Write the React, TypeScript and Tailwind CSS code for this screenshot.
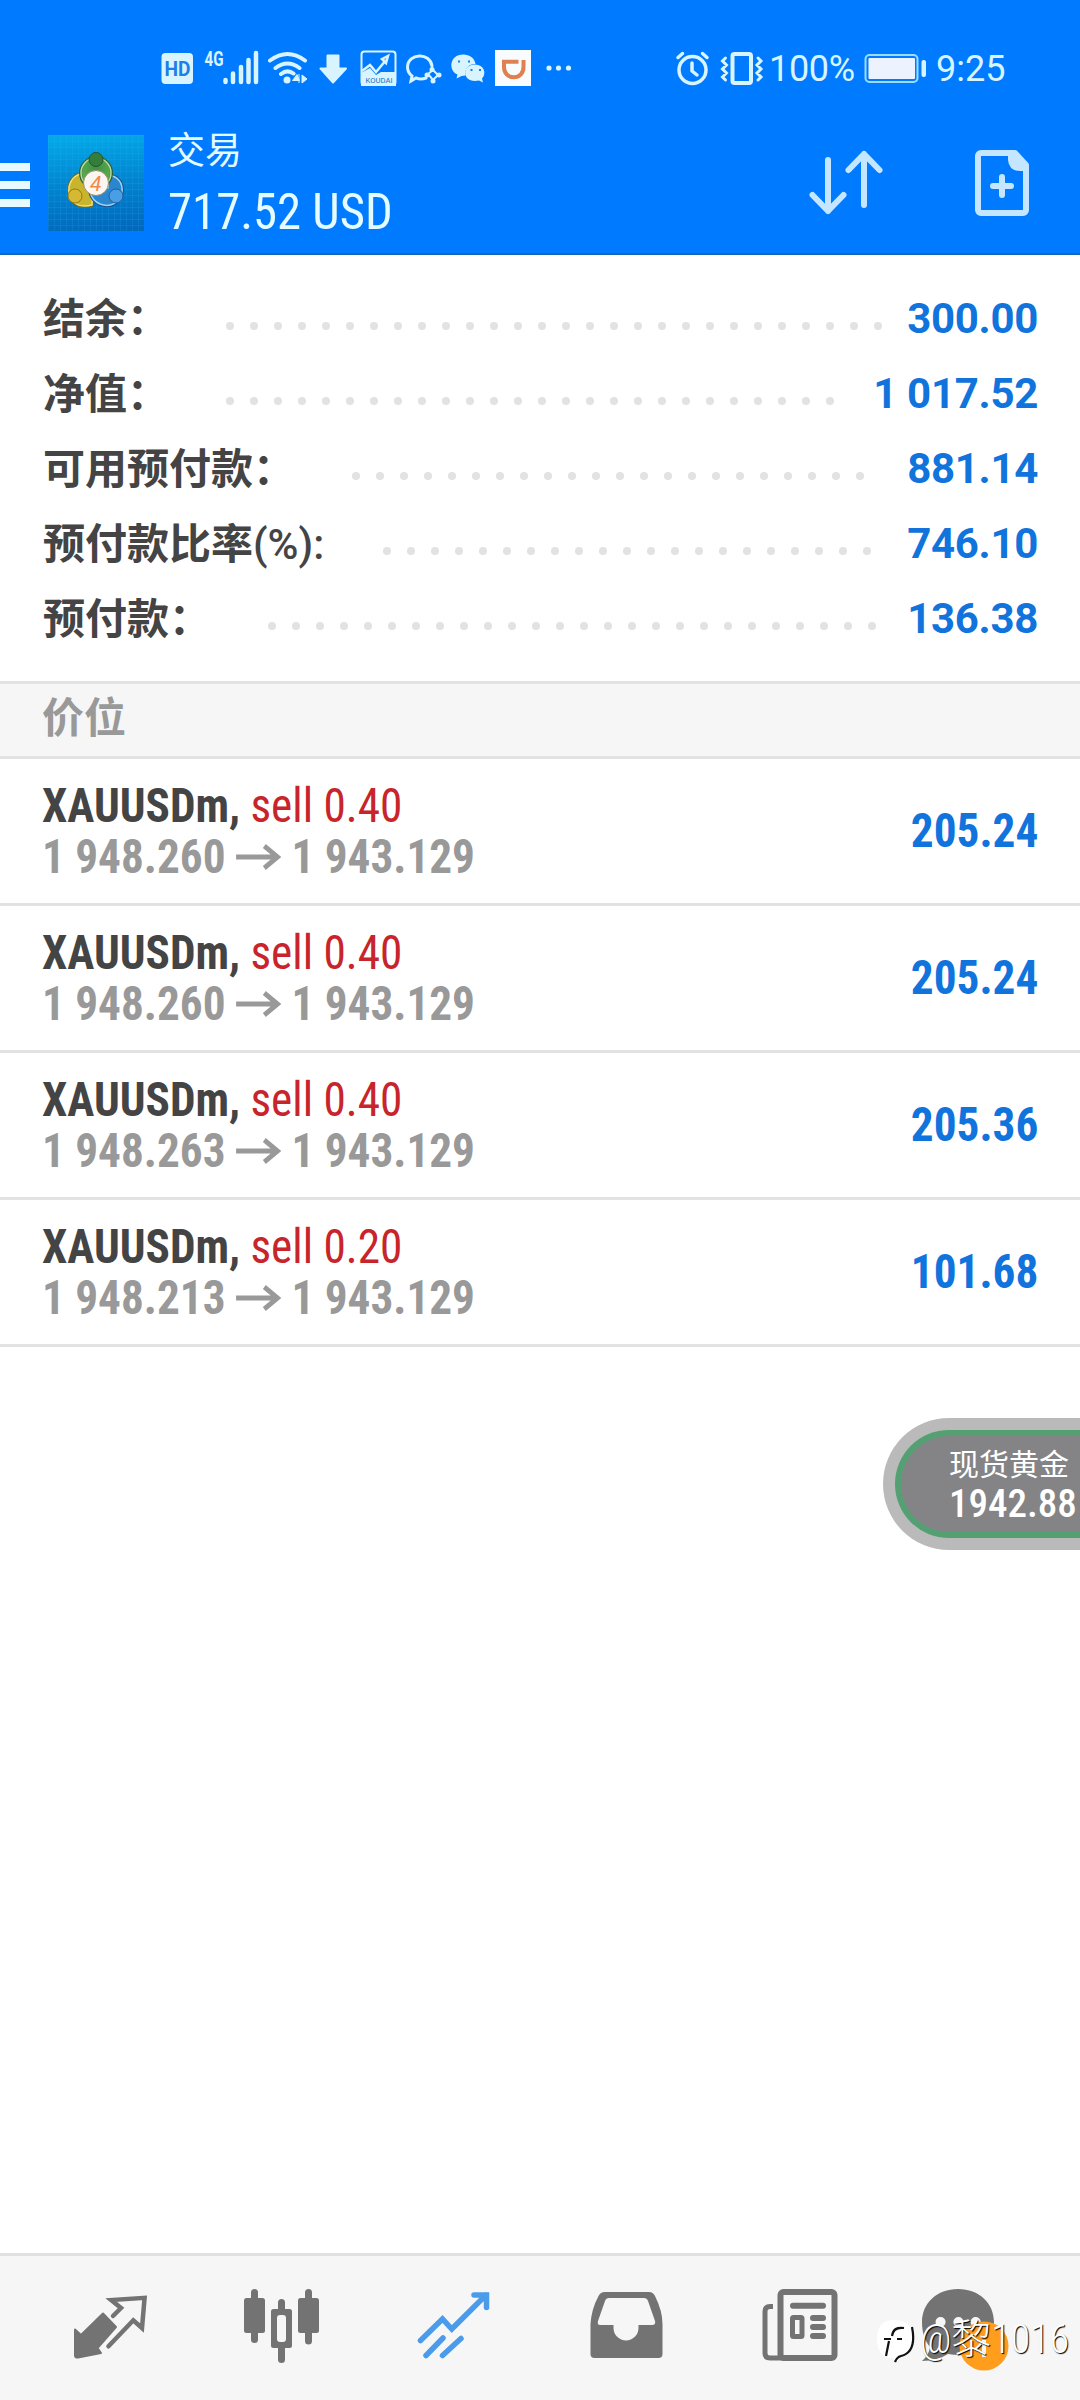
import React from 'react';

interface SummaryRow {
  label: string;
  value: string;
  dots: number;
  labelWidth: string;
}

interface Position {
  volume: string;
  open: string;
  current: string;
  profit: string;
}

const summary: SummaryRow[] = [
  { label: '结余：', value: '300.00', dots: 28, labelWidth: 'w-[183px]' },
  { label: '净值：', value: '1 017.52', dots: 26, labelWidth: 'w-[183px]' },
  { label: '可用预付款：', value: '881.14', dots: 22, labelWidth: 'w-[309px]' },
  { label: '预付款比率(%):', value: '746.10', dots: 21, labelWidth: 'w-[340px]' },
  { label: '预付款：', value: '136.38', dots: 26, labelWidth: 'w-[225px]' },
];

const positions: Position[] = [
  { volume: '0.40', open: '1 948.260', current: '1 943.129', profit: '205.24' },
  { volume: '0.40', open: '1 948.260', current: '1 943.129', profit: '205.24' },
  { volume: '0.40', open: '1 948.263', current: '1 943.129', profit: '205.36' },
  { volume: '0.20', open: '1 948.213', current: '1 943.129', profit: '101.68' },
];

const StatusBar: React.FC = () => (
  <div className="flex h-[122px] items-start pt-[46px] text-[#d8f4ff]">
    {/* Notification icons */}
    <svg className="ml-[156px] h-[44px] w-[424px]" viewBox="156 46 424 44" fill="none" stroke="currentColor">
      <rect x="161.500" y="53" width="31.500" height="31" rx="4" fill="currentColor" stroke="none" />
      <text x="164.500" y="75.500" fill="#1f7fe8" stroke="none" fontSize="20" fontWeight="700" textLength="26" lengthAdjust="spacingAndGlyphs" fontFamily="Roboto, sans-serif">HD</text>
      <text x="204.500" y="66" fill="currentColor" stroke="none" fontSize="20" fontWeight="700" textLength="19" lengthAdjust="spacingAndGlyphs" fontFamily="Roboto, sans-serif">4G</text>
      <path d="M225.500 80v2M233 73.500v8.500M241 67v15M248.500 60v22M256 53v29" strokeWidth="4.500" strokeLinecap="round" />
      <path d="M270 60.500q17.500-13 35 0M275.500 68q12-9 24 0M281 74q6.500-5 12.500-.5" strokeWidth="4" strokeLinecap="round" />
      <circle cx="287" cy="80" r="3.500" fill="currentColor" stroke="none" />
      <path d="M299 74v9M292.500 80.500h7l-2.500-6zM302 75l5 4-5 4z" fill="currentColor" strokeWidth="1" />
      <path d="M327.500 55.500h11v13h7.500L333 82.500l-12.500-14h7z" fill="currentColor" strokeWidth="2" strokeLinejoin="round" />
      <rect x="361.500" y="51.500" width="34" height="33.500" rx="3" strokeWidth="2" />
      <path d="M361 73l9-5 6 7 5-3h15v14h-35z" fill="currentColor" stroke="none" />
      <path d="M362 71l8-6 6 7 10-12M382 59l6-3-2 7z" strokeWidth="2.500" />
      <text x="365.500" y="83" fill="#1f6fc0" stroke="none" fontSize="8" textLength="27" lengthAdjust="spacingAndGlyphs" fontFamily="Roboto, sans-serif">KOUDAI</text>
      <path d="M432 66c-2-14-24-13-24.500 1 0 5 2 7 4.500 9l-1 5 5-3q5 2 10 0" strokeWidth="3" strokeLinecap="round" />
      <path d="M428 74l5-4 5 5-5 5z" strokeWidth="2" />
      <circle cx="432" cy="69.500" r="2.500" fill="currentColor" stroke="none" />
      <circle cx="439" cy="75" r="2.500" fill="currentColor" stroke="none" />
      <circle cx="433" cy="81" r="2.500" fill="currentColor" stroke="none" />
      <circle cx="427" cy="75" r="2.500" fill="currentColor" stroke="none" />
      <path d="M463.500 54.500c-15 0-15 17-6 20l-1 4 5-2.500 4-.5c-1-7 3-11.500 10-11.500-1-6-6-9.500-12-9.500z" fill="currentColor" stroke="none" />
      <path d="M475 64.500c-13 0-13 16.500 0 16.500l4-.5 4 2-1-4c5-5 2-14-7-14z" fill="currentColor" stroke="none" />
      <path d="M458 61.500h2M468 61.500h2M470.500 70h2M479 70h2" stroke="#1f7fe8" strokeWidth="2" />
      <rect x="495" y="50" width="36" height="36" fill="#f8fcff" stroke="none" />
      <path d="M518.500 61.800H504V67c0 6 4 10.300 9.800 10.300S523.500 73 523.500 67v-7" stroke="#e07f51" strokeWidth="4" />
      <circle cx="549" cy="68" r="2.600" fill="currentColor" stroke="none" />
      <circle cx="558.500" cy="68" r="2.600" fill="currentColor" stroke="none" />
      <circle cx="568.500" cy="68" r="2.600" fill="currentColor" stroke="none" />
    </svg>
    <svg className="ml-[94px] h-[44px] w-[92px]" viewBox="674 46 92 44" fill="none" stroke="currentColor" strokeLinecap="round">
      <circle cx="692.500" cy="70" r="13.500" strokeWidth="3.500" />
      <path d="M678 57.500l4.500-4M707 57.500l-4.500-4" strokeWidth="3.500" />
      <path d="M692 63v8l5 4" strokeWidth="3.500" />
      <rect x="732.500" y="54" width="18.500" height="29" rx="2" strokeWidth="4" />
      <path d="M725.500 58l-3 3 4 4-4 4 4 4-4 4 3 3M758 58l3 3-4 4 4 4-4 4 4 4-3 3" strokeWidth="3" />
    </svg>
    <span className="ml-[3px] w-[90px] text-[36px] leading-[47px] tracking-[-0.3px] whitespace-nowrap">100%</span>
    <svg className="ml-[5px] h-[44px] w-[66px]" viewBox="864 46 66 44" fill="none">
      <rect x="865.500" y="55" width="52" height="27" rx="4" stroke="#9cdcff" strokeWidth="2" />
      <rect x="868.500" y="58" width="46.500" height="21" rx="1" fill="#ecf3ff" />
      <rect x="921.500" y="60" width="4.500" height="17" rx="2" fill="#d8f4ff" />
    </svg>
    <span className="ml-[6px] text-[36px] leading-[47px]">9:25</span>
  </div>
);

const AppLogo: React.FC = () => (
  <svg className="h-[96px] w-[96px]" viewBox="0 0 96 96">
    <defs>
      <linearGradient id="sky" x1="0.5" y1="0" x2="0.6" y2="1">
        <stop offset="0" stopColor="#03a8e8" />
        <stop offset="0.500" stopColor="#0184cf" />
        <stop offset="1" stopColor="#0268bd" />
      </linearGradient>
      <radialGradient id="green" cx="0.5" cy="0.3" r="0.7">
        <stop offset="0" stopColor="#3f8f45" />
        <stop offset="1" stopColor="#62b552" />
      </radialGradient>
      <pattern id="grid" width="6" height="6" patternUnits="userSpaceOnUse">
        <path d="M0 .5h6M.5 0v6" stroke="#38b4ea" strokeOpacity=".15" />
      </pattern>
    </defs>
    <rect width="96" height="96" fill="url(#sky)" />
    <rect width="96" height="96" fill="url(#grid)" />
    <path d="M44 70C30 74 19 66 21 52c2-9 8-14 16-13l8 16z" fill="#c9b52b" stroke="#6f6a25" strokeWidth="3.500" />
    <path d="M44 70C30 74 19 66 21 52c2-9 8-14 16-13l8 16z" fill="#c9b52b" stroke="#efe27c" strokeWidth="1.500" />
    <path d="M60 40c10 1 15 8 14 17-2 11-12 16-22 12-7-3-9-8-10-12l18-4z" fill="#2b86d0" stroke="#1b4f84" strokeWidth="3.500" />
    <path d="M60 40c10 1 15 8 14 17-2 11-12 16-22 12-7-3-9-8-10-12l18-4z" fill="#2b86d0" stroke="#9ad3f7" strokeWidth="1.500" />
    <circle cx="48" cy="38" r="15.500" fill="url(#green)" stroke="#2c6335" strokeWidth="3" />
    <circle cx="48" cy="38" r="15" fill="none" stroke="#b5dc9a" strokeWidth="1.500" />
    <circle cx="48" cy="24.500" r="7" fill="#347d3b" stroke="#24572c" />
    <circle cx="27" cy="61" r="7" fill="#d6b832" stroke="#8a7a20" />
    <circle cx="68" cy="61" r="7" fill="#4a9ee3" stroke="#1d5f9d" />
    <circle cx="48" cy="48" r="12.500" fill="#fbf6f0" stroke="#9c8c6a" />
    <text x="42" y="55.500" fontSize="21" fontStyle="italic" fill="#f08a4a" fontFamily="Roboto, sans-serif">4</text>
  </svg>
);

const Header: React.FC = () => (
  <div className="flex h-[131px] items-start">
    <div className="mt-[41px] flex w-[30px] flex-col gap-[10px]">
      <div className="h-2 bg-[#e6faff]"></div>
      <div className="h-2 bg-[#e6faff]"></div>
      <div className="h-2 bg-[#e6faff]"></div>
    </div>
    <div className="mt-[13px] ml-[18px]">
      <AppLogo />
    </div>
    <div className="ml-6 flex flex-1 flex-col text-[#e4fbff]">
      <span className="mt-[10px] text-[37px] leading-[40px]">交易</span>
      <span className="mt-[12px] origin-left scale-x-[0.975] text-[50px] leading-[56px] [font-stretch:75%]">717.52 USD</span>
    </div>
    <svg className="mt-[20px] mr-[88px] h-[76px] w-[78px]" viewBox="806 142 78 76" fill="none" stroke="#c4e6ff" strokeWidth="6" strokeLinecap="round" strokeLinejoin="round">
      <path d="M828 160v51M812.500 195l15.500 16 15.500-16M864 205v-51M848.500 170l15.500-16 15.500 16" />
    </svg>
    <svg className="mt-[24px] mr-[48px] h-[76px] w-[60px]" viewBox="972 146 60 76" fill="none" stroke="#c4e6ff">
      <path d="M981 153h34l11 12v45a3 3 0 0 1-3 3h-42a3 3 0 0 1-3-3v-54a3 3 0 0 1 3-3z" strokeWidth="6" strokeLinejoin="round" />
      <path d="M1008 152v8q1 11 12 11h8v-5l-13-14z" fill="#c4e6ff" stroke="none" />
      <path d="M1002 177v18M993 186h18" strokeWidth="6" strokeLinecap="round" />
    </svg>
  </div>
);

const Summary: React.FC = () => (
  <div className="flex h-[426px] flex-col pt-[26px] pr-[42px] pl-[43px]">
    {summary.map((row) => (
      <div key={row.label} className="flex h-[75px] items-center">
        <span className={`${row.labelWidth} shrink-0 pt-[2px] text-[42px] leading-[60px] font-bold whitespace-nowrap text-[#444]`}>
          {row.label.replace('(%):', '')}
          {row.label.endsWith('(%):') && <span className="font-medium">(%):</span>}
        </span>
        <div className="flex gap-4 pt-[15px]">
          {Array.from({ length: row.dots }).map((_, i) => (
            <div key={i} className="h-2 w-2 rounded-full bg-[#e2e2e2]"></div>
          ))}
        </div>
        <span className="ml-auto text-[42px] font-bold tracking-[-0.3px] whitespace-nowrap text-[#1173dc]">{row.value}</span>
      </div>
    ))}
  </div>
);

const PositionItem: React.FC<{ item: Position }> = ({ item }) => (
  <div className="flex h-[147px] items-center justify-between border-b-[3px] border-[#e2e2e2] pr-[42px] pl-[42px]">
    <div className="flex origin-left scale-x-[0.942] flex-col">
      <div className="text-[48px] leading-[51px] whitespace-nowrap [font-stretch:75%]">
        <span className="font-bold text-[#444]">XAUUSDm,</span>
        <span className="text-[#c8242b]"> sell {item.volume}</span>
      </div>
      <div className="flex items-center text-[48px] leading-[51px] font-bold whitespace-nowrap text-[#999] [font-stretch:75%]">
        <span>{item.open}</span>
        <svg className="mx-[11px] h-[26px] w-[48px]" viewBox="0 0 48 26" fill="none" stroke="currentColor" strokeWidth="5">
          <path d="M0 13h44M30 2l14 11-14 11" />
        </svg>
        <span>{item.current}</span>
      </div>
    </div>
    <span className="origin-right scale-x-[0.942] text-[48px] font-bold text-[#1173dc] [font-stretch:75%]">{item.profit}</span>
  </div>
);

const tabIcons = [
  // Quotes
  <g>
    <path d="M51 73.500l6 5.500 22-21.500 13 13.500-18.500 21 3.500 5-23 4.500q-3 .5-3-2z" fill="currentColor" stroke="currentColor" strokeWidth="2" strokeLinejoin="round" />
    <path d="M89 60l8-8-9.800-8 33.400-2.200L118 72l-8.700-7.700-24.800 26" fill="none" stroke="currentColor" strokeWidth="4.500" strokeLinecap="round" />
  </g>,
  // Charts
  <g fill="currentColor">
    <rect x="48" y="42" width="21" height="35" rx="2.500" />
    <rect x="55" y="33" width="7" height="54" rx="3.500" />
    <rect x="75" y="53" width="21" height="39" rx="2.500" />
    <rect x="82" y="43" width="7" height="64" rx="3.500" />
    <rect x="81" y="59" width="9" height="27" rx="3" fill="#f6f6f6" />
    <rect x="102" y="42" width="21" height="35" rx="2.500" />
    <rect x="109" y="33" width="7" height="55.500" rx="3.500" />
  </g>,
  // Trade
  <path d="M52.500 84.500l22-21.500 9.300 10L118 39M106 39h12.500v12.500M58 99.500l17-17.500M74.500 99.500l18.500-17" fill="none" stroke="#4a9bea" strokeWidth="5.500" strokeLinecap="round" />,
  // History
  <path fillRule="evenodd" fill="currentColor" d="M65 36h44q4 0 6 4 7.500 15 7.500 28v30q0 4-4 4h-64q-4 0-4-4V68q1-15 8-28 2-4 6.500-4zM69 42q-3 0-4 3l-7 20q-1 4 2 4h13.500v3a12.500 12.500 0 0 0 25 0v-3h13.500q4 0 3-4l-7-20q-1-3-4-3z" />,
  // News
  <g fill="none" stroke="currentColor">
    <rect x="68.500" y="36" width="54" height="66" rx="3" strokeWidth="6" />
    <path d="M61 50.500h-3q-5 0-5 5V97q0 5 5 5h14" strokeWidth="5" />
    <path d="M81 49.700h30M101 62h10M101 71h10M101 80h10" strokeWidth="6" strokeLinecap="round" />
    <rect x="80.500" y="61.500" width="9.500" height="19" rx="1" strokeWidth="5" />
  </g>,
  // Chat
  <g>
    <path d="M74 33c21 0 36 14 36 33S95 99 77 99q-8 0-13-1-11 7-26 7 7-6 8-14c-5-6-8-14-8-25 0-19 15-33 36-33z" fill="currentColor" />
    <path d="M56.500 66h.1M74.400 66h.1M91.600 66h.1" stroke="#f6f6f6" strokeWidth="10" strokeLinecap="round" />
    <circle cx="100" cy="90" r="24.500" fill="#ff9d1c" />
    <path d="M100 84v17" stroke="#f6f6f6" strokeWidth="4" />
  </g>,
];

const TabBar: React.FC = () => (
  <div className="flex h-[147px] border-t-[3px] border-[#e0e0e0] bg-[#f6f6f6] pl-6 text-[#737373]">
    {tabIcons.map((icon, i) => (
      <svg key={i} className="h-[144px] w-[172px] shrink-0" viewBox="0 0 172 144">
        {icon}
      </svg>
    ))}
  </div>
);

// Price widget floating over the right edge of the screen
const FloatingPrice: React.FC = () => (
  <div className="absolute top-[1418px] right-0 h-[132px] w-[197px] rounded-l-full bg-[#bababa] py-[12px] pl-[12px]">
    <div className="flex h-full flex-col rounded-l-full border-y-[6px] border-l-[6px] border-[#55a072] bg-[#848486] pt-[10px] pl-[48px] text-white">
      <span className="text-[30px] leading-[38px] whitespace-nowrap">现货黄金</span>
      <span className="text-[39px] leading-[40px] font-medium [font-stretch:75%]">1942.88</span>
    </div>
  </div>
);

const Watermark: React.FC = () => (
  <div className="absolute top-[2312px] left-[874px] flex items-center text-white">
    <svg className="h-[56px] w-[44px]" viewBox="0 0 44 56">
      <path d="M20 8c12 0 19 6 19 18 0 13-5 18-13 20l-4 4-3-4C8 46 3 39 3 26 3 15 8 8 20 8z" fill="#fff" />
      <path d="M38 15c3 15 1 26-11 29q-4 1-6 6M30 16c-7-1-11 1-12 8M10 27h7M23 27h5M15 29l-3 15" fill="none" stroke="#111" strokeWidth="2.200" />
    </svg>
    <span className="ml-[2px] text-[40px] leading-[56px] font-light whitespace-nowrap [font-stretch:85%] [text-shadow:1px_1px_1px_#000]">@黎1016</span>
  </div>
);

const App: React.FC = () => {
  return (
    <div className="relative flex h-[2400px] w-[1080px] flex-col overflow-hidden bg-white font-['Roboto','Noto_Sans_CJK_SC',sans-serif]">
      <div className="h-[255px] border-b-2 border-[#1467bd] bg-[#007bff]">
        <StatusBar />
        <Header />
      </div>
      <Summary />
      <div className="h-[78px] border-y-[3px] border-[#e2e2e2] bg-[#f6f6f6] pl-[42px] text-[42px] leading-[69px] font-bold text-[#999]">
        价位
      </div>
      <div className="flex-1">
        {positions.map((item, index) => (
          <PositionItem key={index} item={item} />
        ))}
      </div>
      <TabBar />
      <FloatingPrice />
      <Watermark />
    </div>
  );
};

export default App;
